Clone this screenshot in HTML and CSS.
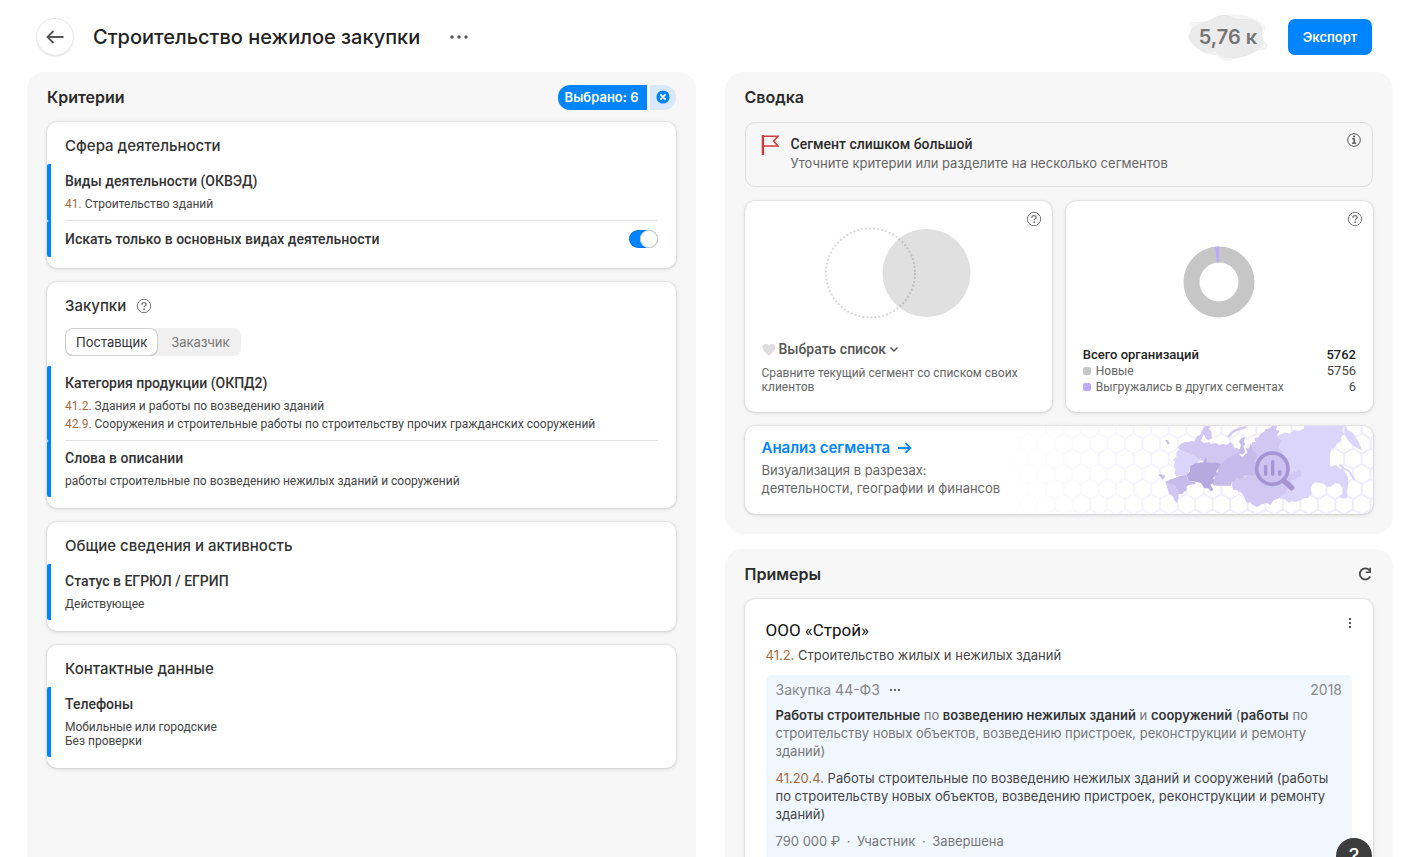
FILE: index.html
```html
<!DOCTYPE html>
<html lang="ru">
<head>
<meta charset="utf-8">
<title>Строительство нежилое закупки</title>
<link rel="stylesheet" href="styles.css">
</head>
<body>
<svg class="defs" aria-hidden="true">
  <symbol id="i-help" viewBox="0 0 16 16"><circle cx="8" cy="8" r="6.7" fill="none" stroke="currentColor"/><path d="M5.9 6.7C5.9 5.3 6.8 4.6 8 4.6s2.1.7 2.1 1.8c0 1.4-1.9 1.4-1.9 2.8" fill="none" stroke="currentColor" stroke-width="1.4"/><circle cx="8.1" cy="11.2" r=".9" fill="currentColor"/></symbol>
</svg>
<div class="page">
  <header class="top">
    <button class="back" aria-label="Назад"><svg width="18" height="14" viewBox="0 0 18 14"><path d="M17.5 7H1.5M7.5 1 1.5 7l6 6" fill="none" stroke="#555" stroke-width="1.8"/></svg></button>
    <h1 class="title">Строительство нежилое закупки</h1>
    <button class="more" aria-label="Ещё"><svg width="20" height="6" viewBox="0 0 20 6" fill="#555"><circle cx="3" cy="3" r="1.7"/><circle cx="10" cy="3" r="1.7"/><circle cx="17" cy="3" r="1.7"/></svg></button>
    <div class="count">
      <svg class="blob" viewBox="0 0 80 48" aria-hidden="true"><path d="M2 11C5 8 14 11 22 7S36 0 43 4c8 5 17 0 25 5 8 4 5 10 6 16 2 6 6 5 5 9-2 4-9 1-14 5-8 5-14 5-20 7-8 3-12 0-16-4-4-2-11 1-17-5C6 33 0 29 1 23c2-5 5-6 1-12Z" fill="#000" fill-opacity=".04" stroke="#000" stroke-opacity=".04"/><path d="M4 15C10 9 19 10 28 4c7-4 24-3 34 0 8 3 17 7 16 12-4 6-4 8-2 14-4 8-17 15-28 15-10 1-14 0-20-6C17 42 8 35 4 30-1 25 1 19 4 15Z" fill="#000" fill-opacity=".04"/></svg>
      <span class="count-text">5,76 к</span>
    </div>
    <button class="export">Экспорт</button>
  </header>

  <main class="columns">
    <section class="panel">
      <div class="panel-head">
        <h2>Критерии</h2>
        <div class="chosen"><button class="chosen-label">Выбрано: 6</button><button class="chosen-clear" aria-label="Сбросить"><svg width="14" height="14" viewBox="0 0 14 14"><circle cx="7" cy="7" r="6.6" fill="#0085ff"/><path d="m4.4 4.4 5.2 5.2m0-5.2L4.4 9.6" stroke="#fff" stroke-width="1.6"/></svg></button></div>
      </div>
      <div class="stack">
        <article class="card group">
          <h3>Сфера деятельности</h3>
          <div class="item"><div class="item-body"><h4>Виды деятельности (ОКВЭД)</h4><p><span class="code">41.</span> Строительство зданий</p></div></div>
          <div class="item"><label class="switch-row"><span>Искать только в основных видах деятельности</span><input class="switch" type="checkbox" role="switch" checked></label></div>
        </article>
        <article class="card group">
          <h3>Закупки <button class="help-inline" aria-label="Справка"><svg width="16" height="16"><use href="#i-help"/></svg></button></h3>
          <div class="tabs" role="tablist"><button class="tab tab-on" role="tab" aria-selected="true">Поставщик</button><button class="tab" role="tab" aria-selected="false">Заказчик</button></div>
          <div class="item"><div class="item-body"><h4>Категория продукции (ОКПД2)</h4><p><span class="code">41.2.</span> Здания и работы по возведению зданий</p><p><span class="code">42.9.</span> Сооружения и строительные работы по строительству прочих гражданских сооружений</p></div></div>
          <div class="item"><div class="item-body"><h4>Слова в описании</h4><p>работы строительные по возведению нежилых зданий и сооружений</p></div></div>
        </article>
        <article class="card group">
          <h3>Общие сведения и активность</h3>
          <div class="item"><div class="item-body"><h4>Статус в ЕГРЮЛ / ЕГРИП</h4><p>Действующее</p></div></div>
        </article>
        <article class="card group">
          <h3>Контактные данные</h3>
          <div class="item"><div class="item-body"><h4>Телефоны</h4><p class="tight">Мобильные или городские<br>Без проверки</p></div></div>
        </article>
      </div>
    </section>

    <div class="side">
      <section class="panel">
        <div class="panel-head"><h2>Сводка</h2></div>
        <div class="stack">
          <div class="alert">
            <svg class="flag" width="18" height="20" viewBox="0 0 18 20"><path d="M2 20V1.2h15L12.6 6l4.4 5H2" fill="none" stroke="#cf3c3c" stroke-width="1.6"/><path d="M1.9 0v20" stroke="#cf3c3c" stroke-width="2.4"/></svg>
            <div class="alert-text"><strong>Сегмент слишком большой</strong><p>Уточните критерии или разделите на несколько сегментов</p></div>
            <button class="info" aria-label="Информация"><svg width="16" height="16" viewBox="0 0 16 16"><circle cx="8" cy="8" r="6.3" fill="none" stroke="#555"/><path d="M6.2 6.8h2V11M6 11.2h4.2" fill="none" stroke="#444" stroke-width="1.3"/><circle cx="8" cy="4.4" r="1" fill="#444"/></svg></button>
          </div>
          <div class="pair">
            <article class="card compare">
              <button class="help" aria-label="Справка"><svg width="16" height="16"><use href="#i-help"/></svg></button>
              <svg class="venn" width="146" height="92" viewBox="0 0 146 92"><circle cx="101.5" cy="46" r="44" fill="#e0e0e0"/><circle cx="45.5" cy="46" r="44.5" fill="none" stroke="#000" stroke-opacity=".15" stroke-width="2" stroke-dasharray="2 2"/></svg>
              <button class="pick"><svg width="14" height="13" viewBox="0 0 14 13"><path d="M7 12.5C2 8.8.6 6.6.6 4.2.6 2.2 2 .8 3.8.8 5.2.8 6.4 1.6 7 2.8 7.6 1.6 8.8.8 10.2.8c1.8 0 3.2 1.4 3.2 3.4 0 2.4-1.4 4.6-6.4 8.3Z" fill="#dedede"/></svg><span>Выбрать список</span><svg width="10" height="7" viewBox="0 0 10 7"><path d="m1.500 1.500 3.500 3.500 3.500-3.500" fill="none" stroke="#555" stroke-width="1.500"/></svg></button>
              <p class="note">Сравните текущий сегмент со списком своих клиентов</p>
            </article>
            <article class="card totals">
              <button class="help" aria-label="Справка"><svg width="16" height="16"><use href="#i-help"/></svg></button>
              <svg class="donut" width="72" height="72" viewBox="0 0 72 72"><circle cx="36" cy="36" r="27.500" fill="none" stroke="#c6c6c6" stroke-width="16"/><path d="M36 8.500A27.500 27.500 0 0 0 33 8.700" fill="none" stroke="#bcaaff" stroke-width="16"/></svg>
              <table class="legend">
                <tr class="sum"><th scope="row">Всего организаций</th><td>5762</td></tr>
                <tr><th scope="row"><i class="dot"></i>Новые</th><td>5756</td></tr>
                <tr><th scope="row"><i class="dot dot-violet"></i>Выгружались в других сегментах</th><td>6</td></tr>
              </table>
            </article>
          </div>
          <a class="card analysis" href="#">
            <svg class="map" width="380" height="88" viewBox="-84 33 1140 264" aria-hidden="true">
              <defs>
                <pattern id="hex" width="52.600" height="91.200" patternUnits="userSpaceOnUse" patternTransform="translate(469.700 237.600)"><path d="M26.300 0 52.600 15.200V45.600L26.300 60.800 0 45.600V15.200ZM26.300 60.800V91.200" fill="none" stroke="#eee9fd" stroke-width="5"/></pattern>
                <linearGradient id="fade"><stop offset="0" stop-color="#fff" stop-opacity="0"/><stop offset=".7" stop-color="#fff"/></linearGradient>
                <mask id="m"><rect x="-84" y="33" width="1140" height="264" fill="url(#fade)"/></mask>
              </defs>
              <rect x="-84" y="33" width="1140" height="264" fill="url(#hex)" mask="url(#m)"/>
              <path fill="#dcd5fb" d="M765 70 775 60 790 52 806 56 818 44 832 48 848 42 850 33H968L964 48 969 58 960 66 962 78 948 86 940 98 930 104 927 120V155L945 150 953 160 966 162 975 176 981 186 982 205 978 228 980 242 976 250 960 250 957 242 964 236 964 218 955 206 942 204 932 214 920 216 908 206 895 204 884 202 874 208 870 218 872 236 862 248 848 250 838 256 822 262 812 258 804 264 790 252 775 250 740 180Z"/>
              <path fill="#d0c7f3" d="M690 95 694 80 704 82 700 70 714 66 718 56 730 50 734 42 746 40 752 33H768L765 45 776 48 768 60 772 68 782 78 772 95 790 120 800 150 796 176 808 178 818 168 826 172 832 162 842 172 840 184 826 188 820 196 808 194 812 208 800 222 790 240 778 244 770 252 758 256 748 270 738 264 722 268 708 276 696 270 686 262 676 262 668 242 660 232 648 226 636 224 632 205 650 190 690 180Z"/>
              <path fill="#c5bcec" d="M598 150 606 138 618 128 630 120 652 112 660 90 654 80 662 68 672 66 668 80 674 88 670 102 684 100 690 84 696 108 708 116 702 140 706 180 672 182 664 190 648 190 642 200 632 202 630 212H606L580 212 570 202 580 190Z"/>
              <path fill="#d0c7f3" d="M470 98 478 88 490 82 500 82 512 78 520 80 528 64 538 60 544 44 552 33H568L564 42 572 52 572 70 562 76 554 70 548 56 540 78 550 84 566 82 570 88 584 84 596 90 606 86 616 90 628 82 636 88 640 98 652 100 656 112 636 120 618 130 600 150 550 142 520 124 484 110Z"/>
              <path fill="#dcd5fb" d="M472 104 490 108 520 122 542 134 522 146 510 150 498 182 480 180 466 184 460 176 464 164 458 152 462 142 456 134 466 126 466 112Z"/>
              <path fill="#b4aae0" d="M508 152 524 144 548 142 553 130 557 130 556 142 576 144 586 142 600 148 594 160 586 168 588 178 576 190 580 200 568 210 577 224 570 230 562 220 550 220 540 204 524 200 504 198 496 180 506 170Z"/>
              <path fill="#c5bcec" d="M434 200 446 194 464 188 478 182 496 180 502 196 512 200 524 202 522 208 502 210 496 216 498 226 488 230 486 236 474 238 460 214 440 212Z"/>
              <path fill="#d0c7f3" d="M434 202 446 208 462 210 474 228 472 250 468 264 460 256 456 244 444 236 440 222Z"/>
              <path fill="#c5bcec" d="m412 180 8-4 6 6 8-2-4 8-6 6-4-8ZM433 74l8 2 5 10-6 2Z"/>
              <path fill="none" stroke="#d0c7f3" stroke-width="7" d="M622 66C630 52 640 44 676 36"/>
              <path fill="none" stroke="#fff" stroke-width="5" d="M682 76 670 96 676 112 664 122 656 118M574 74l8-2M594 72l10 4M614 80l8-8"/>
              <path fill="#dcd5fb" d="M970 33 976 34 978 44 994 52 1006 70 1016 86 1023 106 1008 100 992 88 980 74 970 56Z"/>
              <path fill="none" stroke="#dcd5fb" stroke-width="6" d="M956 148 968 160 984 168 1000 194"/>
              <circle cx="754" cy="161" r="47" fill="#c9bdf0" fill-opacity=".5" stroke="#a595d4" stroke-width="11"/>
              <path d="M792 200 812 218" stroke="#a595d4" stroke-width="16" stroke-linecap="round"/>
              <path d="M734 154V178M755 140V178M776 170V178" stroke="#a595d4" stroke-width="10" stroke-linecap="round"/>
            </svg>
            <div class="analysis-text">
              <span class="analysis-title">Анализ сегмента <svg width="14" height="12" viewBox="0 0 14 12"><path d="M0 6h12M7.500 1.200 12.300 6l-4.800 4.800" fill="none" stroke="#0085ff" stroke-width="1.800"/></svg></span>
              <p>Визуализация в разрезах:<br>деятельности, географии и финансов</p>
            </div>
          </a>
        </div>
      </section>

      <section class="panel panel-grow">
        <div class="panel-head"><h2>Примеры</h2><button class="reload" aria-label="Обновить"><svg width="16" height="16" viewBox="0 0 16 16"><path d="M13.200 10.500A5.500 5.500 0 1 1 12.500 4.300" fill="none" stroke="#4a4a4a" stroke-width="1.800"/><path d="M14 1.800V7H8.800V5.600H12.400V1.800Z" fill="#4a4a4a"/></svg></button></div>
        <article class="card example">
          <div class="example-head"><h3>ООО «Строй»</h3><button class="kebab" aria-label="Меню"><svg width="4" height="10" viewBox="0 0 4 10" fill="#555"><path d="M1 0h2v2H1zM1 4h2v2H1zM1 8h2v2H1z"/></svg></button></div>
          <p class="activity"><span class="code">41.2.</span> Строительство жилых и нежилых зданий</p>
          <div class="tender">
            <div class="tender-head"><span>Закупка 44-ФЗ</span><button class="tender-more" aria-label="Ещё"><svg width="10" height="2" viewBox="0 0 10 2" fill="#666"><path d="M0 0h2v2H0zM4 0h2v2H4zM8 0h2v2H8z"/></svg></button><span class="year">2018</span></div>
            <p class="muted"><b>Работы строительные</b> по <b>возведению нежилых зданий</b> и <b>сооружений</b> (<b>работы</b> по строительству новых объектов, возведению пристроек, реконструкции и ремонту зданий)</p>
            <p><span class="code">41.20.4.</span> Работы строительные по возведению нежилых зданий и сооружений (работы по строительству новых объектов, возведению пристроек, реконструкции и ремонту зданий)</p>
            <p class="muted">790 000 ₽ <span class="sep">·</span> Участник <span class="sep">·</span> Завершена</p>
          </div>
        </article>
      </section>
    </div>
  </main>
  <button class="support" aria-label="Помощь">?</button>
</div>
</body>
</html>
```
FILE: styles.css
```css
* { box-sizing: border-box; }
body, h1, h2, h3, h4, p { margin: 0; }
body {
  background: #fff;
  color: #333;
  font: 400 13px/18px Inter, "Open Sans", sans-serif;
}
button { font: inherit; color: inherit; border: 0; padding: 0; background: none; cursor: pointer; }
svg { display: block; flex: none; }
.defs { position: absolute; width: 0; height: 0; }

.page { height: 100vh; overflow: hidden; display: flex; flex-direction: column; }

.top { display: flex; align-items: center; height: 72px; flex: none; padding: 2px 46px 0 37px; }
.back { width: 36px; height: 36px; border-radius: 50%; display: grid; place-items: center; box-shadow: 0 0 0 1px #ececec, 0 1px 2px #0003; }
.title { margin-left: 20px; font-size: 20px; line-height: 28px; font-weight: 500; color: #222; }
.more { margin-left: 29px; }
.count { position: relative; margin-left: auto; width: 80px; height: 48px; display: grid; place-items: center; }
.blob { position: absolute; inset: 0; }
.count-text { position: relative; font-size: 20px; font-weight: 600; color: #757575; }
.export { margin-left: 20px; width: 84px; height: 36px; border-radius: 7px; background: #0085ff; color: #fff; font-weight: 600; }

.columns { flex: 1; min-height: 0; display: grid; grid-template-columns: 1fr 1fr; gap: 29px; padding: 0 25px 0 27px; }
.panel { background: #f7f7f7; border-radius: 18px; padding: 0 20px 20px; min-width: 0; }
.side { display: flex; flex-direction: column; gap: 15px; min-width: 0; }
.columns > .panel, .panel-grow { border-radius: 18px 18px 0 0; }
.panel-grow { flex: 1 0 auto; }
.panel-head { height: 50px; display: flex; align-items: center; justify-content: space-between; }
h2 { font-size: 16px; line-height: 24px; font-weight: 600; color: #2b2b2b; }
.chosen { display: flex; gap: 3px; height: 25px; color: #fff; font-weight: 600; }
.chosen-label { background: #0085ff; border-radius: 12px 0 0 12px; padding: 0 8px 0 7px; }
.chosen-clear { background: #d9e9fa; border-radius: 0 12px 12px 0; width: 26px; display: grid; place-items: center; }

.stack { display: flex; flex-direction: column; gap: 14px; }
.card { background: #fff; border-radius: 10px; box-shadow: 0 0 0 1px #0000000a, 0 1px 4px #00000026; min-width: 0; }
.group { padding: 11px 0; }
.group h3 { display: flex; align-items: center; gap: 10px; height: 31px; padding: 1px 18px 6px; font-size: 15px; line-height: 24px; font-weight: 500; }
.help-inline { color: #777; }
.item { border-left: 4px solid #0085ff; border-radius: 2px; padding: 0 18px 0 14px; font-family: Roboto, "Open Sans", sans-serif; }
.item-body { padding: 7px 0; }
.item:not(:last-child) .item-body { border-bottom: 1px solid #e2e2e2; }
h4, .switch-row { font-size: 14px; line-height: 20px; font-weight: 500; }
h4 { margin-bottom: 4px; }
.item p { font-size: 12px; line-height: 18px; color: #444; }
.item .tight { line-height: 14px; padding: 2px 0; }
.code { color: #a76b40; }
.switch-row { display: flex; justify-content: space-between; align-items: center; height: 36px; }
.switch { appearance: none; margin: 0; width: 29px; height: 18px; border-radius: 9px; background: #0085ff; box-shadow: inset 0 0 0 1px #0000001a; }
.switch::before { content: ""; display: block; width: 18px; height: 18px; margin-left: auto; border-radius: 50%; background: #fff; box-shadow: inset 0 0 0 1px #c8c8c8; }
.tabs { display: inline-flex; margin: 4px 18px 10px; background: #f0f0f0; border-radius: 8px; height: 28px; vertical-align: top; }
.tab { padding: 0 11px 0 13px; border-radius: 8px; color: #777; }
.tab-on { padding: 0 11px; background: #fff; color: #333; box-shadow: inset 0 0 0 1px #d0d0d0, inset 0 -1px #bbb; }

.alert { display: flex; min-height: 65px; padding: 9px 10px 11px 15px; border: 1px solid #dedede; border-radius: 10px; }
.alert-text { margin: 2px 0 0 12px; flex: 1; color: #666; }
.alert-text strong { display: block; font: 500 14px/20px Roboto, "Open Sans", sans-serif; color: #2b2b2b; }
.info { align-self: flex-start; }
.flag { margin-top: 3px; }
.pair { display: grid; grid-template-columns: 1fr 1fr; gap: 14px; font-family: Roboto, "Open Sans", sans-serif; }
.compare, .totals { position: relative; height: 211px; padding: 17px; display: flex; flex-direction: column; }
.help { position: absolute; top: 10px; right: 10px; color: #777; }
.venn { margin: 9px auto 0; }
.pick { margin-top: 20px; display: flex; align-items: center; gap: 3px; font-size: 14px; line-height: 20px; font-weight: 500; color: #555; }
.note { margin-top: 7px; font-size: 12px; line-height: 14px; color: #666; }
.donut { margin: 28px auto 0; }
.legend { margin-top: auto; width: 100%; border-collapse: collapse; font-size: 12px; line-height: 16px; color: #666; }
.legend th, .legend td { padding: 0; font-weight: 400; text-align: left; }
.legend td { text-align: right; font-size: 13px; color: #444; }
.legend .sum th, .legend .sum td { font-size: 13px; color: #222; font-weight: 500; }
.dot { display: inline-block; width: 8px; height: 8px; margin-right: 5px; border-radius: 2px; background: #c6c6c6; }
.dot-violet { background: #bcaaff; }
.analysis { position: relative; display: block; height: 88px; padding: 10px 17px; overflow: hidden; color: #666; text-decoration: none; }
.map { position: absolute; top: 0; right: 0; }
.analysis-text { position: relative; }
.analysis-title { display: flex; align-items: center; gap: 8px; line-height: 24px; margin-bottom: 1px; font-size: 15px; font-weight: 600; color: #0085ff; }

.example { padding: 19px 21px 21px; color: #444; }
.example-head { display: flex; justify-content: space-between; }
.example h3 { font: 400 17px/24px Roboto, "Open Sans", sans-serif; color: #111; }
.kebab { align-self: flex-start; width: 4px; }
.activity { margin: 4px 0 11px; }
.tender { background: #f0f7ff; border-radius: 6px; padding: 6px 10px 20px; display: flex; flex-direction: column; gap: 9px; }
.tender-head { display: flex; align-items: center; gap: 10px; font-size: 14px; color: #888; margin-bottom: -2px; }
.year { margin-left: auto; }
.muted { color: #777; }
.muted b { color: #333; font-weight: 600; }
.sep { margin: 0 3px; }
.support { position: fixed; right: 46px; bottom: -17px; width: 36px; height: 36px; border-radius: 50%; background: #3d3d3d; color: #fff; font-size: 20px; font-weight: 500; }
```
